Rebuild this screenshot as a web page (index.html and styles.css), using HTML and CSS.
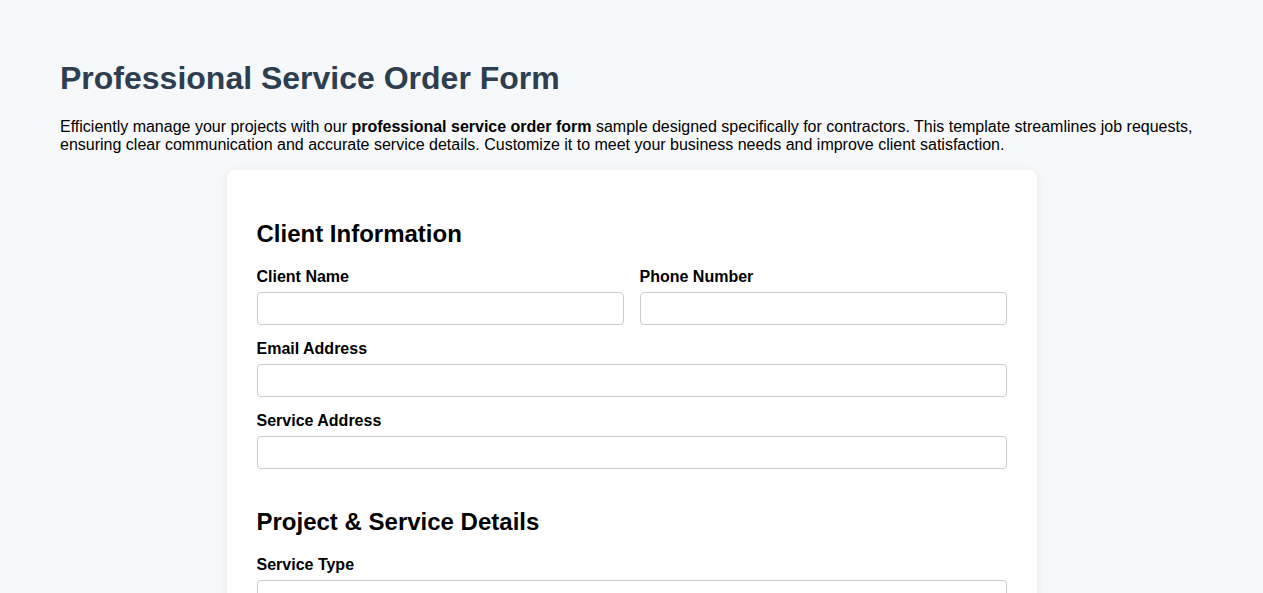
FILE: index.html
```html
<!DOCTYPE html>
<html lang="en">
<head>
<meta charset="utf-8">
<title>Professional Service Order Form</title>
<link rel="stylesheet" href="styles.css">
</head>
<body>
<div class="page">
  <h1 class="title">Professional Service Order Form</h1>
  <p class="intro">Efficiently manage your projects with our <strong>professional service order form</strong> sample designed specifically for contractors. This template streamlines job requests, ensuring clear communication and accurate service details. Customize it to meet your business needs and improve client satisfaction.</p>

  <form class="card">
    <section class="section">
      <h2 class="section-title">Client Information</h2>
      <div class="row">
        <div class="group">
          <label class="label" for="name">Client Name</label>
          <input class="field" id="name" type="text">
        </div>
        <div class="group">
          <label class="label" for="phone">Phone Number</label>
          <input class="field" id="phone" type="tel">
        </div>
      </div>
      <div class="group">
        <label class="label" for="email">Email Address</label>
        <input class="field" id="email" type="email">
      </div>
      <div class="group">
        <label class="label" for="addr">Service Address</label>
        <input class="field" id="addr" type="text">
      </div>
    </section>

    <section class="section">
      <h2 class="section-title">Project &amp; Service Details</h2>
      <div class="group">
        <label class="label" for="type">Service Type</label>
        <select class="field" id="type">
          <option>Select a Service</option>
          <option>Plumbing</option>
          <option>Electrical</option>
          <option>Carpentry</option>
        </select>
      </div>
      <div class="group">
        <label class="label" for="desc">Project Description</label>
        <textarea class="field area" id="desc"></textarea>
      </div>
    </section>
  </form>
</div>
</body>
</html>
```
FILE: styles.css
```css
html, body {
  margin: 0;
  padding: 0;
}
body {
  background: #f7f8fa;
  font-family: "Liberation Sans", Arial, sans-serif;
  color: #000;
}
.page {
  padding: 35px 60px 40px;
}
.title {
  font-size: 32px;
  font-weight: bold;
  color: #2c3e50;
  margin: 25px 0 21px;
  line-height: normal;
}
.intro {
  font-size: 16px;
  line-height: 18px;
  margin: 0 0 16px;
}
.card {
  max-width: 750px;
  margin: 0 auto;
  background: #fff;
  border-radius: 8px;
  padding: 28px 30px 30px;
  box-shadow: 0 2px 10px rgba(0, 0, 0, 0.07);
}
.section {
  padding-top: 22px;
}
.section + .section {
  padding-top: 24px;
}
.section-title {
  font-size: 24px;
  font-weight: bold;
  margin: 0 0 20px;
  line-height: normal;
  color: #000;
}
.row {
  display: grid;
  grid-template-columns: 1fr 1fr;
  column-gap: 16px;
}
.group {
  margin-bottom: 15px;
}
.label {
  display: block;
  font-size: 16px;
  font-weight: bold;
  line-height: 18px;
  margin-bottom: 6px;
}
.field {
  display: block;
  box-sizing: border-box;
  width: 100%;
  height: 33px;
  padding: 8px;
  border: 1px solid #ccc;
  border-radius: 4px;
  background: #fff;
  font-family: "Liberation Sans", Arial, sans-serif;
  font-size: 13.33px;
  color: #000;
}
.area {
  height: 100px;
}
```
